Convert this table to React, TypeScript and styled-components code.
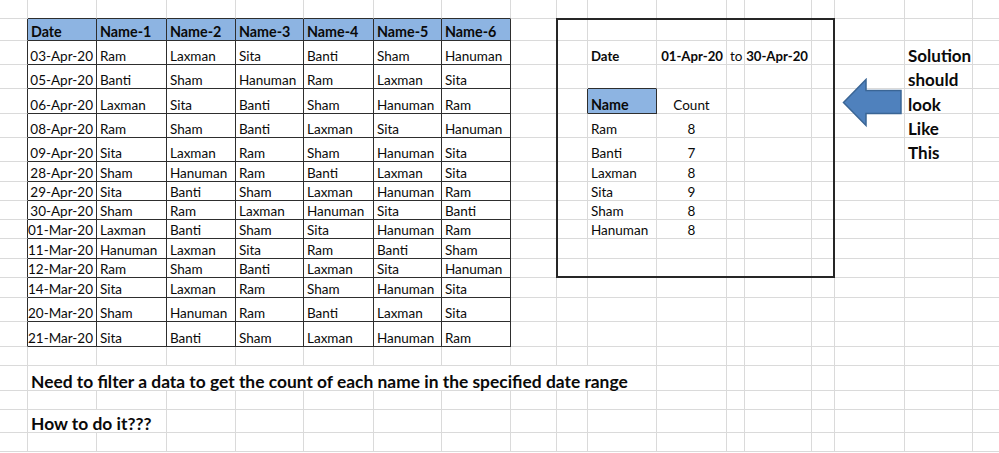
import React from 'react';
import styled, { createGlobalStyle } from 'styled-components';

const COLS = [28, 69, 70, 69, 68, 70, 68, 69, 46, 31, 69, 70, 18, 67, 23, 70, 68, 60];
const ROWS = [19, 22, 24, 24, 25, 24, 24, 20, 19, 19, 19, 20, 19, 20, 24, 25, 19, 25, 19, 23, 19];

const HEADERS = ['Date', 'Name-1', 'Name-2', 'Name-3', 'Name-4', 'Name-5', 'Name-6'];
const DATA = [
  ['03-Apr-20', 'Ram', 'Laxman', 'Sita', 'Banti', 'Sham', 'Hanuman'],
  ['05-Apr-20', 'Banti', 'Sham', 'Hanuman', 'Ram', 'Laxman', 'Sita'],
  ['06-Apr-20', 'Laxman', 'Sita', 'Banti', 'Sham', 'Hanuman', 'Ram'],
  ['08-Apr-20', 'Ram', 'Sham', 'Banti', 'Laxman', 'Sita', 'Hanuman'],
  ['09-Apr-20', 'Sita', 'Laxman', 'Ram', 'Sham', 'Hanuman', 'Sita'],
  ['28-Apr-20', 'Sham', 'Hanuman', 'Ram', 'Banti', 'Laxman', 'Sita'],
  ['29-Apr-20', 'Sita', 'Banti', 'Sham', 'Laxman', 'Hanuman', 'Ram'],
  ['30-Apr-20', 'Sham', 'Ram', 'Laxman', 'Hanuman', 'Sita', 'Banti'],
  ['01-Mar-20', 'Laxman', 'Banti', 'Sham', 'Sita', 'Hanuman', 'Ram'],
  ['11-Mar-20', 'Hanuman', 'Laxman', 'Sita', 'Ram', 'Banti', 'Sham'],
  ['12-Mar-20', 'Ram', 'Sham', 'Banti', 'Laxman', 'Sita', 'Hanuman'],
  ['14-Mar-20', 'Sita', 'Laxman', 'Ram', 'Sham', 'Hanuman', 'Sita'],
  ['20-Mar-20', 'Sham', 'Hanuman', 'Ram', 'Banti', 'Laxman', 'Sita'],
  ['21-Mar-20', 'Sita', 'Banti', 'Sham', 'Laxman', 'Hanuman', 'Ram'],
];
const COUNTS: [string, string][] = [
  ['Ram', '8'],
  ['Banti', '7'],
  ['Laxman', '8'],
  ['Sita', '9'],
  ['Sham', '8'],
  ['Hanuman', '8'],
];
const NOTE = ['Solution', 'should', 'look', 'Like', 'This'];

type Font = 'body' | 'head' | 'label' | 'note' | 'question';
type Align = 'left' | 'right' | 'center';

interface Spec {
  text?: string;
  font?: Font;
  align?: Align;
  fill?: string;
  span?: number;
}

const FONTS: Record<Font, string> = {
  body: 'font-weight: 400; font-size: 13.5px;',
  head: 'font-weight: 700; font-size: 14.3px;',
  label: 'font-weight: 700; font-size: 13.2px;',
  note: 'font-weight: 700; font-size: 17px;',
  question: 'font-weight: 700; font-size: 17.4px;',
};

const BLUE = '#8db4e2';
const GRID = '#dadada';
const INK = '#2e2e2e';

const GlobalStyle = createGlobalStyle`
  html, body {
    margin: 0;
    padding: 0;
    background: #ffffff;
    overflow: hidden;
  }
  body {
    font-family: Lato, "Open Sans", sans-serif;
    color: #000000;
  }
`;

const Sheet = styled.div`
  display: grid;
  grid-template-columns: ${COLS.map((w) => `${w}px`).join(' ')};
  grid-template-rows: ${ROWS.map((h) => `${h}px`).join(' ')};
  width: 999px;
  height: 453px;
  overflow: hidden;
  background: #ffffff;
  font-family: Lato, "Open Sans", sans-serif;
`;

const Cell = styled.div<{
  $row: number;
  $col: number;
  $span: number;
  $darkRight: boolean;
  $darkBottom: boolean;
  $fill?: string;
  $align: Align;
  $font: Font;
}>`
  grid-row: ${(p) => p.$row + 1};
  grid-column: ${(p) => p.$col + 1} / span ${(p) => p.$span};
  box-sizing: border-box;
  display: flex;
  align-items: flex-end;
  justify-content: ${(p) =>
    p.$align === 'right' ? 'flex-end' : p.$align === 'center' ? 'center' : 'flex-start'};
  padding: 0 ${(p) => (p.$align === 'right' ? '3px' : '2px')} 0 ${(p) => (p.$align === 'left' ? '3px' : '2px')};
  border-right: 1px solid ${(p) => (p.$darkRight ? INK : GRID)};
  border-bottom: 1px solid ${(p) => (p.$darkBottom ? INK : GRID)};
  background: ${(p) => p.$fill ?? 'transparent'};
  white-space: nowrap;
  line-height: 16px;
  min-width: 0;
  color: #0a0a0a;
  ${(p) => FONTS[p.$font]}
`;

const SummaryFrame = styled.div`
  grid-row: 2 / 14;
  grid-column: 10 / 16;
  margin: -1px 0 0 -1px;
  border: 2px solid #262626;
  pointer-events: none;
  z-index: 1;
`;

const ArrowSlot = styled.div`
  grid-row: 4 / 7;
  grid-column: 16 / 17;
  padding: 13px 0 0 7px;
  pointer-events: none;
  z-index: 2;
`;

function specFor(r: number, c: number): Spec {
  // data table
  if (r === 1 && c >= 1 && c <= 7) {
    return { text: HEADERS[c - 1], font: 'head', fill: BLUE };
  }
  if (r >= 2 && r <= 15 && c >= 1 && c <= 7) {
    const row = DATA[r - 2];
    return { text: row[c - 1], align: c === 1 ? 'right' : 'left' };
  }
  // summary box
  if (r === 2) {
    if (c === 10) return { text: 'Date', font: 'label' };
    if (c === 11) return { text: '01-Apr-20', font: 'label', align: 'right' };
    if (c === 12) return { text: 'to' };
    if (c === 13) return { text: '30-Apr-20', font: 'label', align: 'right' };
  }
  if (r === 4) {
    if (c === 10) return { text: 'Name', font: 'head', fill: BLUE };
    if (c === 11) return { text: 'Count', align: 'center' };
  }
  if (r >= 5 && r <= 10) {
    const item = COUNTS[r - 5];
    if (c === 10) return { text: item[0] };
    if (c === 11) return { text: item[1], align: 'center' };
  }
  // side note
  if (r >= 2 && r <= 6 && c === 16) {
    return { text: NOTE[r - 2], font: 'note' };
  }
  // question
  if (r === 17 && c === 1) {
    return {
      text: 'Need to filter a data to get the count of each name in the specified date range',
      font: 'question',
      span: 10,
    };
  }
  if (r === 19 && c === 1) {
    return { text: 'How to do it???', font: 'question', span: 2 };
  }
  return {};
}

function isDarkRight(r: number, c: number): boolean {
  if (r >= 1 && r <= 15 && c >= 0 && c <= 7) return true;
  if (r === 4 && (c === 9 || c === 10)) return true;
  return false;
}

function isDarkBottom(r: number, c: number): boolean {
  if (r >= 0 && r <= 15 && c >= 1 && c <= 7) return true;
  if (c === 10 && (r === 3 || r === 4)) return true;
  return false;
}

function LeftArrow() {
  return (
    <svg width="62" height="50" viewBox="0 0 62 50">
      <polygon
        points="1.5,24.5 24,1.5 24,12.5 59,12.5 59,35.5 24,35.5 24,47.5"
        fill="#4f81bd"
        stroke="#3a6595"
        strokeWidth="1.5"
        strokeLinejoin="miter"
      />
    </svg>
  );
}

export default function App() {
  const cells: React.ReactNode[] = [];
  for (let r = 0; r < ROWS.length; r++) {
    let c = 0;
    while (c < COLS.length) {
      const spec = specFor(r, c);
      const span = spec.span ?? 1;
      const last = c + span - 1;
      cells.push(
        <Cell
          key={`${r}-${c}`}
          $row={r}
          $col={c}
          $span={span}
          $darkRight={isDarkRight(r, last)}
          $darkBottom={isDarkBottom(r, c)}
          $fill={spec.fill}
          $align={spec.align ?? 'left'}
          $font={spec.font ?? 'body'}
        >
          {spec.text}
        </Cell>
      );
      c += span;
    }
  }

  return (
    <>
      <GlobalStyle />
      <Sheet>
        {cells}
        <SummaryFrame />
        <ArrowSlot>
          <LeftArrow />
        </ArrowSlot>
      </Sheet>
    </>
  );
}
